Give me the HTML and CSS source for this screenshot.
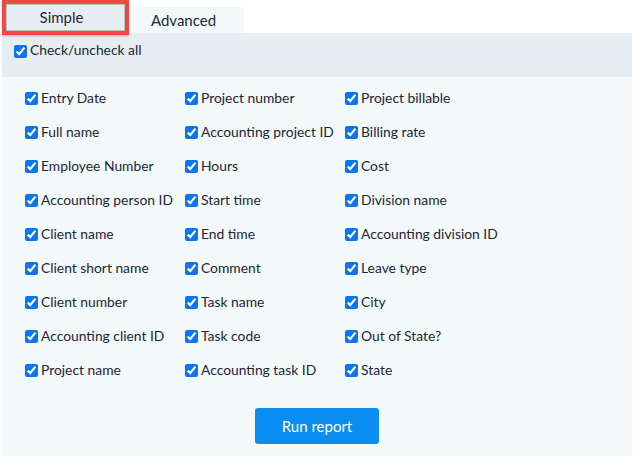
FILE: index.html
```html
<!DOCTYPE html>
<html lang="en">
<head>
    <meta charset="UTF-8">
    <meta name="viewport" content="width=device-width, initial-scale=1.0">
    <title>Report Columns</title>
    <link rel="stylesheet" href="styles.css">
</head>
<body>
    <div class="report">
        <div class="tabs">
            <div class="tab tab-active">Simple</div>
            <div class="tab">Advanced</div>
        </div>
        <div class="panel-head">
            <label class="check"><input type="checkbox" checked>Check/uncheck all</label>
        </div>
        <div class="panel-body">
            <div class="columns">
                <label class="check"><input type="checkbox" checked>Entry Date</label>
                <label class="check"><input type="checkbox" checked>Full name</label>
                <label class="check"><input type="checkbox" checked>Employee Number</label>
                <label class="check"><input type="checkbox" checked>Accounting person ID</label>
                <label class="check"><input type="checkbox" checked>Client name</label>
                <label class="check"><input type="checkbox" checked>Client short name</label>
                <label class="check"><input type="checkbox" checked>Client number</label>
                <label class="check"><input type="checkbox" checked>Accounting client ID</label>
                <label class="check"><input type="checkbox" checked>Project name</label>

                <label class="check"><input type="checkbox" checked>Project number</label>
                <label class="check"><input type="checkbox" checked>Accounting project ID</label>
                <label class="check"><input type="checkbox" checked>Hours</label>
                <label class="check"><input type="checkbox" checked>Start time</label>
                <label class="check"><input type="checkbox" checked>End time</label>
                <label class="check"><input type="checkbox" checked>Comment</label>
                <label class="check"><input type="checkbox" checked>Task name</label>
                <label class="check"><input type="checkbox" checked>Task code</label>
                <label class="check"><input type="checkbox" checked>Accounting task ID</label>

                <label class="check"><input type="checkbox" checked>Project billable</label>
                <label class="check"><input type="checkbox" checked>Billing rate</label>
                <label class="check"><input type="checkbox" checked>Cost</label>
                <label class="check"><input type="checkbox" checked>Division name</label>
                <label class="check"><input type="checkbox" checked>Accounting division ID</label>
                <label class="check"><input type="checkbox" checked>Leave type</label>
                <label class="check"><input type="checkbox" checked>City</label>
                <label class="check"><input type="checkbox" checked>Out of State?</label>
                <label class="check"><input type="checkbox" checked>State</label>
            </div>
            <div class="actions">
                <button type="button" class="run-btn">Run report</button>
            </div>
        </div>
    </div>
</body>
</html>
```

FILE: styles.css
```css
body {
    margin: 0;
    background-color: #ffffff;
    font-family: Lato, 'Open Sans', sans-serif;
    color: #1c2638;
}
.report {
    margin-left: 2px;
    width: 630px;
}
.tabs {
    display: flex;
    height: 33px;
    align-items: flex-end;
}
.tab {
    box-sizing: border-box;
    height: 26px;
    width: 115px;
    padding-right: 6px;
    display: flex;
    align-items: center;
    justify-content: center;
    font-size: 15px;
    background-color: #f3f9fa;
}
.tab-active {
    position: relative;
    z-index: 1;
    width: 127px;
    height: 35px;
    margin-bottom: -2px;
    padding-right: 8px;
    padding-bottom: 2px;
    border: 4px solid #f0493f;
    background-color: #e7eef1;
    box-shadow: inset 0 0 0 1px #b9c2c8, 0 1px 2px rgba(0, 0, 0, 0.25);
}
.panel-head {
    height: 44px;
    box-sizing: border-box;
    padding: 8px 12px 0;
    background-color: #e6eef1;
}
.panel-body {
    background-color: #f3f9f9;
    padding: 3px 0 12px 23px;
}
.columns {
    display: grid;
    grid-auto-flow: column;
    grid-template-rows: repeat(9, 34px);
    grid-template-columns: repeat(3, 160px);
}
.check {
    display: flex;
    align-items: center;
    gap: 3px;
    font-size: 13.85px;
    line-height: 17px;
}
.check input {
    margin: 3px 0 0;
    width: 13px;
    height: 13px;
    accent-color: #0b74ef;
}
.actions {
    display: flex;
    justify-content: center;
    margin-top: 22px;
    padding-right: 23px;
}
.run-btn {
    width: 124px;
    height: 36px;
    border: none;
    border-radius: 3px;
    background-color: #0a8df0;
    color: #ffffff;
    font-family: Lato, 'Open Sans', sans-serif;
    font-size: 15px;
    cursor: pointer;
}
```
